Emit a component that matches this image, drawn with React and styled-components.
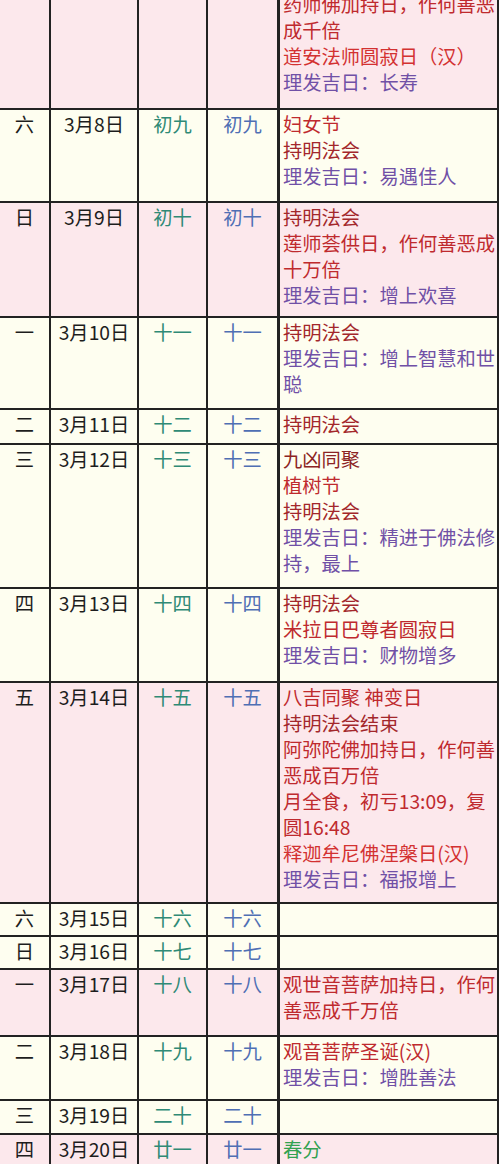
import React from 'react';
import styled, { createGlobalStyle } from 'styled-components';

const GlobalStyle = createGlobalStyle`
  html, body {
    margin: 0;
    padding: 0;
    background: #ffffff;
  }
  body {
    font-family: "Noto Sans CJK SC", "Noto Sans", sans-serif;
  }
`;

const TONES = {
  ink: '#1d1d1d',
  teal: '#2f8a76',
  blue: '#4f6fb4',
  dark: '#a3272b',
  red: '#bf2a2e',
  bright: '#d33131',
  maroon: '#8c2323',
  purple: '#7050a6',
  green: '#33a150',
};

const Viewport = styled.div`
  width: 500px;
  height: 1164px;
  overflow: hidden;
  background: #ffffff;
`;

const Table = styled.div`
  width: 499px;
  margin-top: -38px;
  display: flex;
  flex-direction: column;
`;

const Row = styled.div`
  box-sizing: border-box;
  display: grid;
  grid-template-columns: 51px 88px 69px 72px 219px;
  height: ${(p) => p.$h}px;
  border-top: 2px solid #222;
  background: ${(p) => (p.$pink ? '#fce8ec' : '#fefef0')};
`;

const Cell = styled.div`
  box-sizing: border-box;
  border-right: 2px solid #222;
  padding-top: 1px;
  font-size: 19.3px;
  line-height: 26px;
  text-align: center;
  color: ${TONES.ink};
  overflow: hidden;
`;

const DayCell = styled(Cell)``;

const DateCell = styled(Cell)``;

const LunarCell = styled(Cell)`
  color: ${(p) => TONES[p.$tone]};
  border-right-width: ${(p) => (p.$last ? 3 : 2)}px;
`;

const NotesCell = styled(Cell)`
  text-align: left;
  padding-left: 3px;
  padding-right: 0;
`;

const Note = styled.div`
  color: ${(p) => TONES[p.$tone]};
`;

const rows = [
  {
    day: '五', date: '3月7日', lunar: '初八', h: 146, pink: true,
    notes: [
      ['持明法会', 'dark'],
      ['药师佛加持日，作何善恶成千倍', 'red'],
      ['道安法师圆寂日（汉）', 'bright'],
      ['理发吉日：长寿', 'purple'],
    ],
  },
  {
    day: '六', date: '3月8日', lunar: '初九', h: 93,
    notes: [
      ['妇女节', 'red'],
      ['持明法会', 'dark'],
      ['理发吉日：易遇佳人', 'purple'],
    ],
  },
  {
    day: '日', date: '3月9日', lunar: '初十', h: 115, pink: true,
    notes: [
      ['持明法会', 'dark'],
      ['莲师荟供日，作何善恶成十万倍', 'red'],
      ['理发吉日：增上欢喜', 'purple'],
    ],
  },
  {
    day: '一', date: '3月10日', lunar: '十一', h: 92,
    notes: [
      ['持明法会', 'dark'],
      ['理发吉日：增上智慧和世聪', 'purple'],
    ],
  },
  {
    day: '二', date: '3月11日', lunar: '十二', h: 35,
    notes: [['持明法会', 'dark']],
  },
  {
    day: '三', date: '3月12日', lunar: '十三', h: 144,
    notes: [
      ['九凶同聚', 'maroon'],
      ['植树节', 'red'],
      ['持明法会', 'dark'],
      ['理发吉日：精进于佛法修持，最上', 'purple'],
    ],
  },
  {
    day: '四', date: '3月13日', lunar: '十四', h: 94,
    notes: [
      ['持明法会', 'dark'],
      ['米拉日巴尊者圆寂日', 'red'],
      ['理发吉日：财物增多', 'purple'],
    ],
  },
  {
    day: '五', date: '3月14日', lunar: '十五', h: 221, pink: true,
    notes: [
      ['八吉同聚 神变日', 'red'],
      ['持明法会结束', 'dark'],
      ['阿弥陀佛加持日，作何善恶成百万倍', 'red'],
      ['月全食，初亏13:09，复圆16:48', 'red'],
      ['释迦牟尼佛涅槃日(汉)', 'bright'],
      ['理发吉日：福报增上', 'purple'],
    ],
  },
  { day: '六', date: '3月15日', lunar: '十六', h: 33, notes: [] },
  { day: '日', date: '3月16日', lunar: '十七', h: 33, notes: [] },
  {
    day: '一', date: '3月17日', lunar: '十八', h: 67, pink: true,
    notes: [['观世音菩萨加持日，作何善恶成千万倍', 'red']],
  },
  {
    day: '二', date: '3月18日', lunar: '十九', h: 64,
    notes: [
      ['观音菩萨圣诞(汉)', 'red'],
      ['理发吉日：增胜善法', 'purple'],
    ],
  },
  { day: '三', date: '3月19日', lunar: '二十', h: 34, notes: [] },
  {
    day: '四', date: '3月20日', lunar: '廿一', h: 40, pink: true,
    notes: [['春分', 'green']],
  },
];

export default function App() {
  return (
    <>
      <GlobalStyle />
      <Viewport>
        <Table>
          {rows.map((r) => (
            <Row key={r.date} $h={r.h} $pink={r.pink}>
              <DayCell>{r.day}</DayCell>
              <DateCell>{r.date}</DateCell>
              <LunarCell $tone="teal">{r.lunar}</LunarCell>
              <LunarCell $tone="blue" $last>{r.lunar}</LunarCell>
              <NotesCell>
                {r.notes.map(([text, tone], i) => (
                  <Note key={i} $tone={tone}>{text}</Note>
                ))}
              </NotesCell>
            </Row>
          ))}
        </Table>
      </Viewport>
    </>
  );
}
